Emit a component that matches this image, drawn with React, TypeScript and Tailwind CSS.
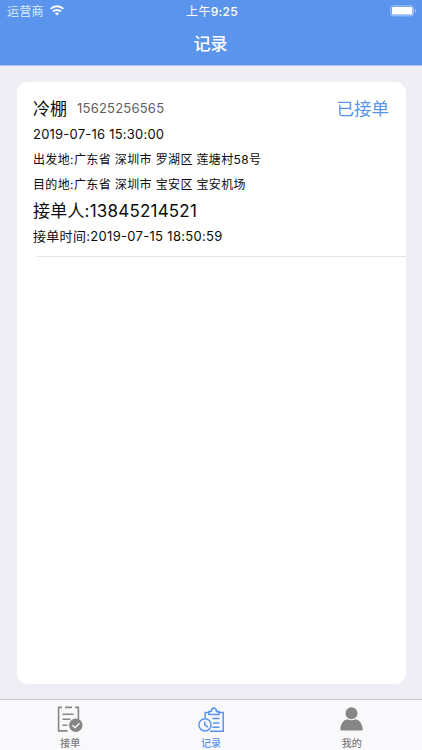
import type { ReactNode } from "react";

function Line({ className, children }: { className: string; children: ReactNode }) {
  return <div className={`whitespace-pre text-[#0c0c0c] ${className}`}>{children}</div>;
}

function StatusBar() {
  return (
    <div className="flex h-[21px] items-center text-[12px] leading-[21px] text-white">
      <div className="flex flex-1 items-center gap-[6px] pl-[7px]">
        <span className="pt-px tracking-[0.2px] text-[#dceafc]">运营商</span>
        <svg width="14" height="11" viewBox="0 0 14 11" fill="none" stroke="white" strokeWidth="2">
          <path d="M.7 3.9C4.2.5 9.8.5 13.3 3.9" />
          <path d="M3 6.5c2.2-2.1 5.8-2.1 8 0" />
          <path d="M7 10.5 4.8 8.3c1.2-1.1 3.2-1.1 4.4 0Z" fill="white" stroke="none" />
        </svg>
      </div>
      <span className="pt-px tracking-[0.3px]">
        上午<span className="font-medium">9:25</span>
      </span>
      <div className="flex flex-1 justify-end pr-[5px]">
        <svg width="27" height="12" viewBox="0 0 27 12">
          <rect x=".8" y=".8" width="22.7" height="10" rx="2.5" fill="none" stroke="#abc9f7" />
          <rect x="2" y="2" width="20.3" height="7.6" rx="1.2" fill="white" />
          <path d="M25 4v3.8c1.5-.5 1.5-3.3 0-3.8Z" fill="#abc9f7" />
        </svg>
      </div>
    </div>
  );
}

function OrdersIcon() {
  return (
    <svg width="26" height="27" viewBox="0 0 26 27" fill="none" stroke="#868686" strokeWidth="1.6">
      <path d="M5 1.4H1.6v23.5h9M8 1.4h7M18 1.4h3.4v12M5.5 8.2h11M5.5 13.3h8M5.5 19.3h5" />
      <circle cx="18.8" cy="19.2" r="6.7" fill="#868686" stroke="none" />
      <path d="m15.5 19.2 2.5 2.5 4.5-4.5" stroke="#f9f9fb" strokeWidth="1.5" />
    </svg>
  );
}

function RecordsIcon() {
  return (
    <svg width="27" height="27" viewBox="0 -0.8 27 27" fill="none" stroke="#5b94ed" strokeWidth="1.5">
      <path d="M7.2 11V5.7h4M19.5 5.7h5.7v18.7H12" />
      <path d="M10.8 7.6V4.8h2.5c.1-2 1-3.5 2.6-3.5s2.5 1.5 2.6 3.5H21v2.8Z" />
      <path d="M14.3 11.7h7.2M15 16.2h6.5M14.3 20.5h7.2" />
      <circle cx="7" cy="18" r="6.1" />
      <path d="M6.8 14.6v3.7l3.3 2" />
    </svg>
  );
}

function ProfileIcon() {
  return (
    <svg width="24" height="24" viewBox="0 0 24 24" fill="#868686">
      <circle cx="11.5" cy="6.2" r="6" />
      <path d="M.3 22.7C.5 16.6 3.5 13 7.5 12.2c2.4 1.4 5.6 1.4 8 0 4 .8 7 4.4 7.2 10.5 0 .4-.3.7-.8.7H1.1c-.5 0-.8-.3-.8-.7Z" />
    </svg>
  );
}

function Tab({ icon, label, active = false }: { icon: ReactNode; label: string; active?: boolean }) {
  return (
    <div className="flex flex-1 flex-col items-center pt-[5px]">
      <div className="flex h-[28px] items-center">{icon}</div>
      <span className={`mt-[3px] text-[10px] font-medium leading-[14px] ${active ? "text-[#5b94ed]" : "text-[#7d7d7d]"}`}>
        {label}
      </span>
    </div>
  );
}

export default function App() {
  return (
    <div className="flex h-[750px] w-[422px] flex-col overflow-hidden bg-[#efeef5] font-['Inter','Noto_Sans_CJK_SC',sans-serif]">
      <header className="h-[66px] shrink-0 border-b border-[#a9c8f5] bg-[#5b94ed]">
        <StatusBar />
        <h1 className="pr-px text-center text-[17px] font-medium leading-[46px] text-white">记录</h1>
      </header>
      <main className="flex-1 px-[17px] pt-[16px]">
        <section className="h-[602px] w-[389px] rounded-[11px] bg-white pt-[14px]">
          <div className="flex h-[26px] items-center pl-[16px] pr-[17px]">
            <span className="text-[17px] leading-[28px] text-[#0c0c0c]">冷棚</span>
            <span className="ml-[10px] text-[13px] tracking-[0.22px] text-[#606060]">15625256565</span>
            <span className="ml-auto text-[17.5px] leading-[28px] text-[#5b94ed]">已接单</span>
          </div>
          <div className="pl-[16px]">
            <Line className="h-[25px] text-[13px] leading-[25px] tracking-[0.22px]">2019-07-16 15:30:00</Line>
            <Line className="h-[25px] text-[12px] leading-[25px] tracking-[0.37px]">出发地:广东省 深圳市 罗湖区 莲塘村58号</Line>
            <Line className="h-[24px] pt-px text-[12px] leading-[24px] tracking-[0.37px]">目的地:广东省 深圳市 宝安区 宝安机场</Line>
            <Line className="h-[28px] pt-px text-[17px] leading-[28px] tracking-[0.2px]">接单人:13845214521</Line>
            <Line className="h-[25px] text-[13px] leading-[25px] tracking-[0.31px]">接单时间:2019-07-15 18:50:59</Line>
          </div>
          <div className="ml-[20px] mt-[7px] h-px bg-[#e6e6e8]" />
        </section>
      </main>
      <nav className="flex h-[51px] shrink-0 border-t border-[#c8c8cd] bg-[#f9f9fb]">
        <Tab icon={<OrdersIcon />} label="接单" />
        <Tab icon={<RecordsIcon />} label="记录" active />
        <Tab icon={<ProfileIcon />} label="我的" />
      </nav>
    </div>
  );
}
